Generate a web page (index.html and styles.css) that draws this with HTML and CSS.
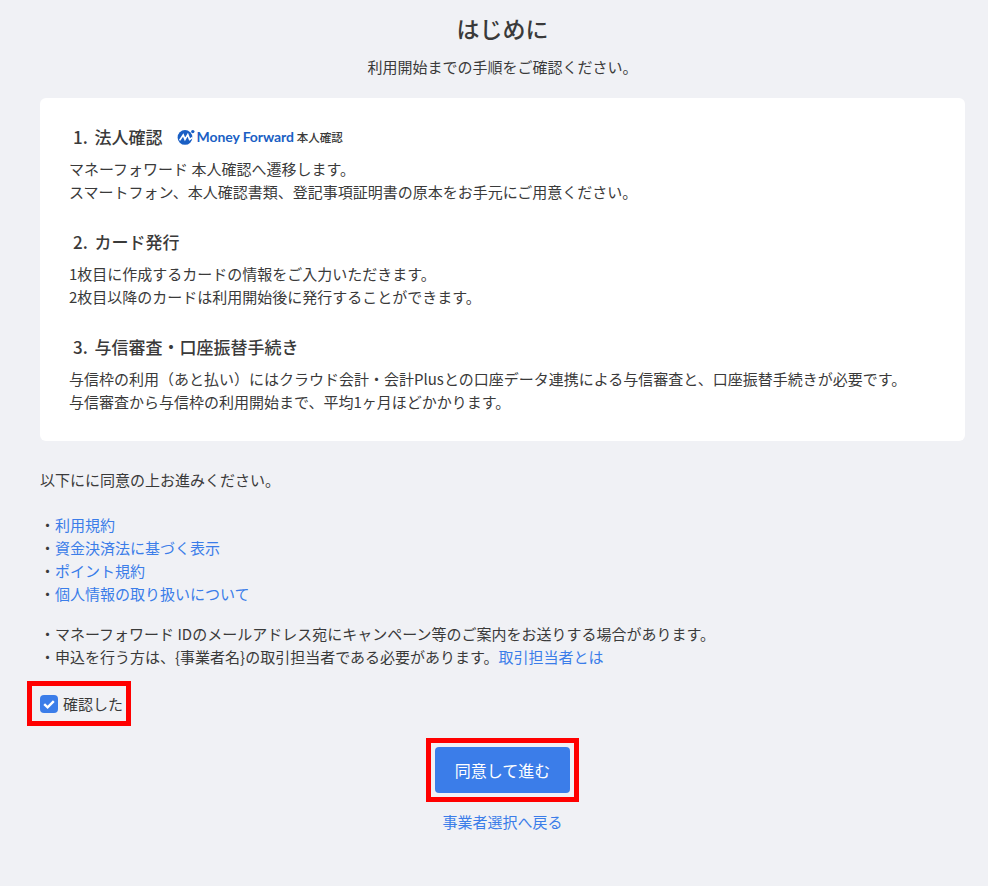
FILE: index.html
```html
<!DOCTYPE html>
<html lang="ja">
  <head>
    <meta charset="utf-8">
    <title>はじめに</title>
    <link rel="stylesheet" href="styles.css">
  </head>
  <body>
    <main class="page">
      <h1 class="page__title">はじめに</h1>
      <p class="page__lead">利用開始までの手順をご確認ください。</p>

      <section class="card">
        <div class="step">
          <h2 class="step__title">
            1. 法人確認
            <span class="brand">
              <svg class="brand__mark" viewBox="0 0 18 16" width="18" height="16">
                <circle cx="8" cy="8.4" r="7.4" fill="#1a5fc4"/>
                <path d="M2.6 11.4 6.2 6 8 10.4 10.8 5.6 12.6 10.4 15.6 8.6" fill="none" stroke="#fff" stroke-width="1.7"/>
                <circle cx="15.8" cy="2.6" r="1.7" fill="#1a5fc4"/>
              </svg>
              <span class="brand__name">Money Forward</span>
              <span class="brand__sub">本人確認</span>
            </span>
          </h2>
          <p class="step__text">マネーフォワード 本人確認へ遷移します。<br>スマートフォン、本人確認書類、登記事項証明書の原本をお手元にご用意ください。</p>
        </div>
        <div class="step">
          <h2 class="step__title">2. カード発行</h2>
          <p class="step__text">1枚目に作成するカードの情報をご入力いただきます。<br>2枚目以降のカードは利用開始後に発行することができます。</p>
        </div>
        <div class="step">
          <h2 class="step__title">3. 与信審査・口座振替手続き</h2>
          <p class="step__text">与信枠の利用（あと払い）にはクラウド会計・会計Plusとの口座データ連携による与信審査と、口座振替手続きが必要です。<br>与信審査から与信枠の利用開始まで、平均1ヶ月ほどかかります。</p>
        </div>
      </section>

      <p class="terms__lead">以下にに同意の上お進みください。</p>
      <ul class="terms__list">
        <li>・<a href="#">利用規約</a></li>
        <li>・<a href="#">資金決済法に基づく表示</a></li>
        <li>・<a href="#">ポイント規約</a></li>
        <li>・<a href="#">個人情報の取り扱いについて</a></li>
      </ul>
      <ul class="terms__list terms__list--notes">
        <li>・マネーフォワード IDのメールアドレス宛にキャンペーン等のご案内をお送りする場合があります。</li>
        <li>・申込を行う方は、{事業者名}の取引担当者である必要があります。<a href="#">取引担当者とは</a></li>
      </ul>

      <label class="check">
        <span class="check__box">
          <svg viewBox="0 0 18 18" width="18" height="18"><path d="M4.2 9.2 7.6 12.4 13.8 6.2" fill="none" stroke="#fff" stroke-width="2.4"/></svg>
        </span>
        確認した
      </label>

      <div class="actions">
        <div class="actions__frame">
          <button class="actions__btn" type="button">同意して進む</button>
        </div>
        <a class="actions__back" href="#">事業者選択へ戻る</a>
      </div>
    </main>
  </body>
</html>
```

FILE: styles.css
```css
* {
  margin: 0;
  padding: 0;
  box-sizing: border-box;
}
body {
  background-color: #f0f1f5;
  color: #3a3a3a;
  font-family: "Noto Sans CJK JP", "Noto Sans", sans-serif;
  font-size: 15px;
  line-height: 23px;
}
a {
  color: #3b7de9;
  text-decoration: none;
}
.page {
  padding: 11px 23px 0 40px;
}
.page__title {
  font-size: 23px;
  font-weight: 500;
  line-height: 34px;
  text-align: center;
}
.page__lead {
  margin-top: 10px;
  font-size: 15px;
  text-align: center;
}
.card {
  margin-top: 20px;
  padding: 26px 29px 28px;
  background-color: #fff;
  border-radius: 6px;
}
.step {
  margin-bottom: 26px;
}
.step:last-child {
  margin-bottom: 0;
}
.step__title {
  display: flex;
  align-items: center;
  padding-left: 4px;
  margin-bottom: 7px;
  font-size: 17px;
  font-weight: 500;
  line-height: 26px;
  word-spacing: 3px;
}
.brand {
  display: flex;
  align-items: center;
  margin: -1px 0 0 14px;
  word-spacing: 0;
}
.brand__mark {
  margin-right: 2px;
}
.brand__name {
  color: #1a5fc4;
  font-family: "Lato", sans-serif;
  font-size: 14px;
  font-weight: 700;
  letter-spacing: -0.1px;
}
.brand__sub {
  margin-left: 3px;
  font-size: 11.5px;
  font-weight: 500;
}
.terms__lead {
  margin-top: 27px;
}
.terms__list {
  margin-top: 22px;
  list-style: none;
}
.terms__list--notes {
  margin-top: 17px;
}
.check {
  display: flex;
  align-items: center;
  gap: 5px;
  width: 104px;
  height: 45px;
  margin: 13px 0 0 -13px;
  padding-left: 8px;
  border: 5px solid #f00;
}
.check__box {
  display: flex;
  width: 18px;
  height: 18px;
  background-color: #3b7de9;
  border-radius: 4px;
}
.actions {
  display: flex;
  flex-direction: column;
  align-items: center;
  margin-top: 12px;
}
.actions__frame {
  padding: 4px;
  border: 5px solid #f00;
}
.actions__btn {
  display: block;
  width: 135px;
  height: 46px;
  border: 0;
  border-radius: 4px;
  background-color: #3b7de9;
  color: #fff;
  font-family: inherit;
  font-size: 16px;
}
.actions__back {
  margin-top: 8px;
}
```
